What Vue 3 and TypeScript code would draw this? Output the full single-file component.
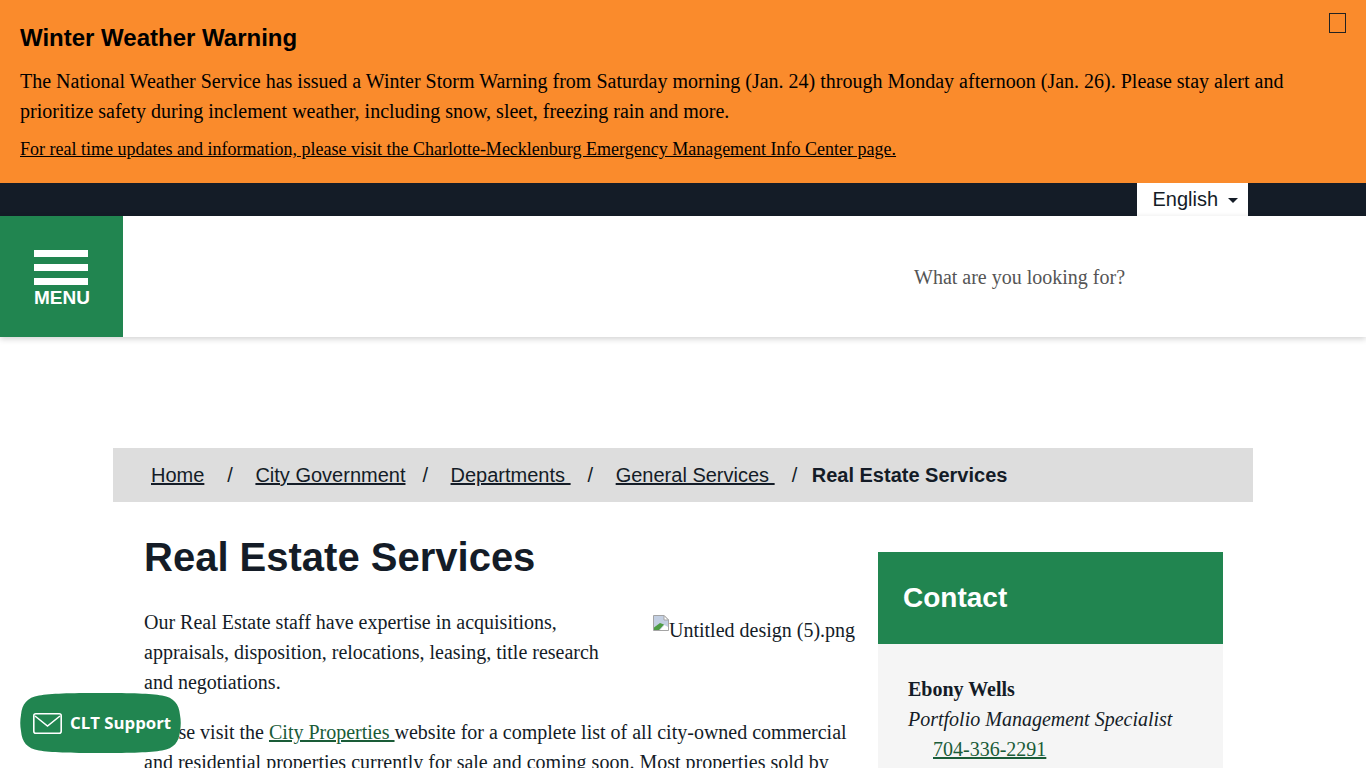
<script setup lang="ts">
const crumbs: { label: string; cls: string }[] = [
  { label: 'Home', cls: 'sep-first' },
  { label: 'City Government', cls: '' },
  { label: 'Departments ', cls: '' },
  { label: 'General Services ', cls: 'sep-last' },
]
</script>

<template>
  <div class="page">
    <section class="alert">
      <span class="close" aria-hidden="true"></span>
      <h2 class="alert-title">Winter Weather Warning</h2>
      <p class="alert-text">The National Weather Service has issued a Winter Storm Warning from Saturday morning (Jan. 24) through Monday afternoon (Jan. 26). Please stay alert and prioritize safety during inclement weather, including snow, sleet, freezing rain and more.</p>
      <a class="alert-link" href="#">For real time updates and information, please visit the Charlotte-Mecklenburg Emergency Management Info Center page.</a>
    </section>

    <div class="topbar">
      <div class="lang">English<span class="caret"></span></div>
    </div>

    <header class="header">
      <button class="menu" type="button">
        <span class="bar"></span>
        <span class="bar"></span>
        <span class="bar"></span>
        <span class="menu-label">MENU</span>
      </button>
      <div class="search">What are you looking for?</div>
    </header>

    <main class="main">
      <nav class="crumbs">
        <template v-for="c in crumbs" :key="c.label">
          <a href="#" class="crumb">{{ c.label }}</a>
          <span class="sep" :class="c.cls">/</span>
        </template>
        <strong class="current">Real Estate Services</strong>
      </nav>

      <div class="columns">
        <article class="content">
          <h1 class="title">Real Estate Services</h1>
          <div class="broken">
            <svg class="broken-icon" width="16" height="16" viewBox="0 0 16 16">
              <path d="M0.5 0.5H11L15.5 5V15.5H0.5Z" fill="#c3cfe2" stroke="#a4a4a4" />
              <path d="M11 0.5V5H15.5Z" fill="#fff" stroke="#a4a4a4" />
              <path d="M1 15V12.5L7 8L11 9.5L6 15Z" fill="#4d9c45" />
              <path d="M7 15L11.5 10L15 12V15Z" fill="#fff" />
            </svg>Untitled design (5).png
          </div>
          <p class="para">Our Real Estate staff have expertise in acquisitions, appraisals, disposition, relocations, leasing, title research and negotiations.</p>
          <p class="para">Please visit the <a href="#" class="green-link">City Properties </a>website for a complete list of all city-owned commercial and residential properties currently for sale and coming soon. Most properties sold by</p>
        </article>

        <aside class="side">
          <h2 class="side-head">Contact</h2>
          <div class="side-body">
            <strong class="name">Ebony Wells</strong>
            <em class="role">Portfolio Management Specialist</em>
            <a href="#" class="green-link phone">704-336-2291</a>
          </div>
        </aside>
      </div>
    </main>

    <button class="support" type="button">
      <svg width="29" height="21" viewBox="0 0 29 21" fill="none" stroke="#fff" stroke-width="1.6">
        <rect x="0.8" y="0.8" width="27.4" height="19.4" rx="2" />
        <path d="M2 3L14.5 13L27 3" />
      </svg>
      <span>CLT Support</span>
    </button>
  </div>
</template>

<style>
html, body {
  margin: 0;
  overflow: hidden;
  background: #fff;
}
</style>

<style scoped>
.page {
  height: 768px;
  overflow: hidden;
  position: relative;
  font-family: "Liberation Serif", serif;
  font-size: 20px;
  line-height: 30px;
  color: #141c27;
}
.alert {
  position: relative;
  height: 183px;
  box-sizing: border-box;
  padding: 20px 20px 0;
  background: #fa8b2c;
  color: #000;
}
.close {
  position: absolute;
  top: 13px;
  left: 1329px;
  width: 15px;
  height: 18px;
  border: 1px solid #222;
}
.alert-title {
  margin: 0 0 10px;
  font: bold 24px/36px "Liberation Sans", sans-serif;
}
.alert-text {
  margin: 0 0 7px;
  max-width: 1300px;
}
.alert-link {
  font-size: 18px;
  line-height: 27px;
  color: #000;
}
.topbar {
  height: 33px;
  background: #141c27;
  display: flex;
  justify-content: flex-end;
  padding-right: 118px;
}
.lang {
  width: 111px;
  box-sizing: border-box;
  padding-left: 15.5px;
  background: #fff;
  font: 20px/33px "Liberation Sans", sans-serif;
  display: flex;
  align-items: center;
}
.caret {
  margin-left: 10px;
  margin-top: 2px;
  border-left: 5px solid transparent;
  border-right: 5px solid transparent;
  border-top: 5px solid #141c27;
}
.header {
  position: relative;
  height: 121px;
  display: flex;
  background: #fff;
  box-shadow: 0 2px 6px rgba(0, 0, 0, 0.18);
}
.menu {
  width: 123px;
  height: 121px;
  border: 0;
  padding: 34px 0 0 34px;
  background: #218550;
  display: flex;
  flex-direction: column;
  align-items: flex-start;
}
.bar {
  width: 54px;
  height: 7px;
  margin-bottom: 7px;
  background: #fff;
}
.menu-label {
  margin-top: -6px;
  font: bold 19px/24px "Liberation Sans", sans-serif;
  color: #fff;
}
.search {
  margin: 46px 0 0 791px;
  color: #555;
}
.main {
  width: 1140px;
  margin: 111px 0 0 113px;
}
.crumbs {
  height: 54px;
  box-sizing: border-box;
  padding-left: 38px;
  background: #ddd;
  display: flex;
  align-items: center;
  font: 20px/30px "Liberation Sans", sans-serif;
  white-space: pre;
}
.crumb {
  color: #141c27;
}
.sep {
  margin: 0 22.5px 0 17px;
}
.sep-first {
  margin-left: 23px;
}
.sep-last {
  margin-right: 14.5px;
}
.current {
  font-weight: bold;
}
.columns {
  display: flex;
  padding-left: 31px;
}
.content {
  width: 712px;
  flex: none;
}
.title {
  margin: 30px 0 25px;
  font: bold 40px/50px "Liberation Sans", sans-serif;
}
.broken {
  float: right;
  width: 203px;
  height: 60px;
  margin: 8px 0 0 50px;
  line-height: 30px;
  white-space: nowrap;
}
.broken-icon {
  vertical-align: 6px;
}
.para {
  margin: 0 0 20px;
}
.green-link {
  color: #1a5c38;
}
.side {
  width: 345px;
  margin: 50px 0 0 22px;
}
.side-head {
  margin: 0;
  height: 92px;
  box-sizing: border-box;
  padding-left: 25px;
  background: #218550;
  color: #fff;
  font: bold 28px/92px "Liberation Sans", sans-serif;
}
.side-body {
  padding: 30px;
  background: #f5f5f5;
  display: flex;
  flex-direction: column;
  align-items: flex-start;
}
.phone {
  margin-left: 25px;
}
.support {
  position: absolute;
  left: 20px;
  top: 693px;
  width: 161px;
  height: 60px;
  border: 0;
  clip-path: path("M80.5 0C112 0 130 .5 142 2.5C154 4.5 159 11 160 22C161 27 161 33 160 38C159 49 154 55.5 142 57.5C130 59.5 112 60 80.5 60C49 60 31 59.5 19 57.5C7 55.5 2 49 1 38C0 33 0 27 1 22C2 11 7 4.5 19 2.5C31 .5 49 0 80.5 0Z");
  background: #218550;
  color: #fff;
  display: flex;
  align-items: center;
  gap: 8px;
  padding: 0 0 0 13px;
  font: bold 16.8px/24px "Open Sans", sans-serif;
  white-space: nowrap;
}
</style>
